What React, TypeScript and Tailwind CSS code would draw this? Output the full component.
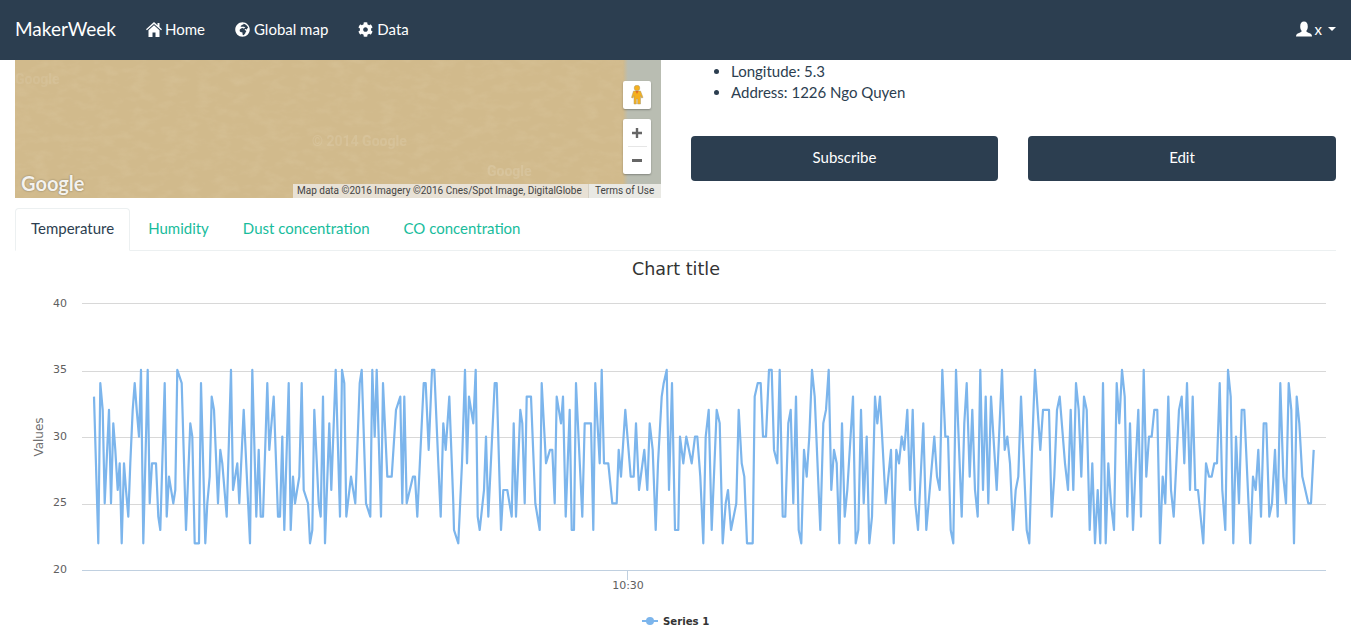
import { FaCog, FaGlobeAfrica } from "react-icons/fa";

// Traced vertices: [x, value] taken per chart band, x0 is the band's left edge
const bands: [number, number[]][] = [
  [20, [222,33,235,22,241,34,248,32,254,25,267,32,273,25,280,31,286,29,293,26,299,28,305,22,312,28,318,26,325,24,331,28,338,32,344,34,350,32,357,30,363,35,370,22,383,35,389,25,396,28,408,28,415,24,421,23,434,34,440,24,447,27,460,25,466,26,472,35,485,34,498,23,511,31,517,30,524,22,537,22,543,34,556,22,562,25,569,27,575,33,582,32,594,25,601,29,607,28,620,24,633,35,639,26,652,28,658,25,671,32,690,22,697,35,709,24,716,29,722,24,729,24,742,34,748,29,761,33,774,24,780,24,787,30,793,23,806,34,812,23,819,27,825,25,838,27,845,34,851,26,864,25,870,22,877,23,883,32,896,25,902,24,909,33,915,22,928,31,934,26,947,35,960,24,966,35,973,34,979,24]],
  [350, [3,27,16,25,29,34,35,35,48,25,61,24,67,35,74,30,80,35,93,24,99,34,112,27,125,27,138,32,151,33,157,25,163,33,170,25,189,27,195,27,202,24,221,34,227,34,236,29,246,35,253,35,265,28,272,24,280,31,287,29,298,33,310,25,312,23,325,22,336,28,345,35,351,28,357,33,370,31,377,35,383,24,389,23,402,26,408,30,415,24,434,34,440,34,453,23,460,26,472,26,485,24,491,31,498,24,511,32,517,31,524,25,530,33,543,33,556,25,569,23,575,34,588,28,600,29,607,29,614,25,620,33,633,31,639,33,647,24,659,32,665,23,672,23,678,34,697,24,704,31,723,31,730,23,736,34,749,28,755,35,762,28,775,28,787,25,800,25,806,29,813,27,826,32,842,27,851,27,858,31,867,26,883,29,892,26,899,31,908,29,917,23,924,28,935,33,941,34,950,35,957,26,966,34,975,23,985,23]],
  [680, [0,30,10,28,19,30,35,28,45,30,52,30,61,27,70,22,77,30,86,32,95,23,110,32,119,31,128,22,137,25,144,26,153,23,169,25,176,32,185,28,193,27,201,22,218,22,224,33,233,34,242,34,249,30,258,30,267,35,275,35,282,29,292,28,299,35,308,24,316,24,325,31,332,32,340,25,348,33,356,23,364,22,372,29,380,27,388,30,396,35,404,33,421,23,430,31,438,32,446,35,454,26,462,29,470,28,478,22,486,31,494,24,502,26,519,33,527,22,535,23,543,32,551,25,560,30,568,22,576,24,585,33,592,31,600,33,617,25,633,29,641,22,649,29,657,28,665,30,673,29,682,32,690,26,698,32,706,25,714,23,730,31,739,23,763,30,771,27,779,26,787,35,796,30,804,30,812,23,820,22,828,35,845,24,853,31,860,34,869,27,877,32,885,26,893,24,901,35,909,26,917,33,925,25,933,33,950,26,966,35,974,29,982,30]],
  [1010, [0,28,9,23,17,26,25,27,33,33,50,23,58,22,66,29,75,35,91,29,99,32,117,32,125,24,133,27,141,32,149,33,165,28,174,26,182,32,190,26,198,34,206,32,214,27,222,33,230,32,239,23,247,28,255,22,263,26,271,22,279,34,287,22,295,28,303,25,312,23,320,34,328,31,336,35,344,33,352,24,360,31,369,23,377,28,385,32,393,24,401,35,409,27,417,30,425,30,433,32,442,32,450,22,458,27,466,25,475,33,483,26,491,24,507,32,515,33,523,28,531,34,540,26,548,33,556,26,564,26,580,22,588,28,597,27,605,27,613,28,621,28,629,34,637,26,646,23,654,35,662,33,670,22,678,30,687,25,695,32,703,32,721,22,729,27,737,26,745,29,753,24,761,31,769,31,778,24,786,25,795,29,803,24,811,34,820,27,828,25,836,34,844,32,852,22,860,33,868,31,877,27,895,25,903,25,911,29]],
];

const valueY = (v: number) => 570 - (v - 20) * 13.34;

const linePoints = bands
  .flatMap(([x0, d]) => {
    const out: string[] = [];
    for (let i = 0; i < d.length; i += 2) {
      out.push(`${(x0 + d[i] / 3).toFixed(1)},${valueY(d[i + 1]).toFixed(1)}`);
    }
    return out;
  })
  .join(" ");

const yLabels = [
  { t: 40, y: 307 },
  { t: 35, y: 373 },
  { t: 30, y: 440 },
  { t: 25, y: 506 },
  { t: 20, y: 573 },
];

const UserIcon = () => (
  <svg width="16" height="16" viewBox="0 0 16 16" fill="currentColor">
    <path d="M0 15.5c0-2.2 1-3 3-3.6 1.6-.5 2.6-1 2.8-1.800-.9-1-1.600-2.500-1.600-4.600C4.200 2.300 5.600.500 8 .500s3.800 1.800 3.800 5c0 2.100-.7 3.600-1.600 4.600.2.800 1.200 1.300 2.800 1.800 2 .6 3 1.400 3 3.600z" />
  </svg>
);

const HomeIcon = () => (
  <svg width="16" height="15" viewBox="0 0 16 15" fill="currentColor">
    <path d="M8 0 0 7.200l.9 1L8 2l7.100 6.200.9-1L13.500 5V1h-2v2.200z" />
    <path d="M8 3.300 2.500 8.200V15h4v-4.500h3V15h4V8.200z" />
  </svg>
);

const NavLink = ({ icon, label }: { icon: React.ReactNode; label: string }) => (
  <a className="flex items-center text-white">
    <span className="flex w-[19px] shrink-0">{icon}</span>
    <span>{label}</span>
  </a>
);

const MapPanel = () => (
  <div className="relative h-[138px] w-[646px] shrink-0 overflow-hidden bg-[#d1ba8c] font-['Roboto',sans-serif]">
    {/* satellite texture + grey strip on the right */}
    <svg className="absolute inset-0 h-full w-full" viewBox="0 0 646 138">
      <defs>
        <filter id="sat">
          <feTurbulence type="fractalNoise" baseFrequency="0.06 0.12" numOctaves="3" seed="4" />
          <feColorMatrix values="0 0 0 0 0.95  0 0 0 0 0.88  0 0 0 0 0.72  0 0 0 0.9 -0.38" />
        </filter>
        <linearGradient id="edge" x1="0" x2="1">
          <stop offset="0" stopColor="#d1ba8c" />
          <stop offset="1" stopColor="#b9bdb2" />
        </linearGradient>
      </defs>
      <rect width="646" height="138" filter="url(#sat)" opacity="0.22" />
      <rect x="608" width="5" height="138" fill="url(#edge)" />
      <rect x="613" width="33" height="138" fill="#b9bdb2" />
      <text x="297" y="86" fontSize="14" fontWeight="700" fill="#fff" opacity="0.1">© 2014 Google</text>
      <text x="472" y="116" fontSize="14" fontWeight="700" fill="#fff" opacity="0.12">Google</text>
      <text x="0" y="24" fontSize="14" fontWeight="700" fill="#fff" opacity="0.08">Google</text>
    </svg>
    <span className="absolute bottom-[3px] left-[6px] font-['Lato',sans-serif] text-[20px] leading-[24px] font-bold text-[#f4f2ee] [text-shadow:0_0_2px_rgba(0,0,0,0.4)]">
      Google
    </span>
    <div className="absolute top-[21px] right-[10px] flex h-[28px] w-[28px] items-center justify-center rounded-[2px] bg-white shadow-[0_1px_2px_rgba(0,0,0,0.3)]">
      <svg width="14" height="20" viewBox="0 0 14 20">
        <circle cx="7" cy="3" r="2.800" fill="#f5b01e" stroke="#a89a70" strokeWidth="0.5" />
        <path d="M3.500 6h7l2.500 6.500-1.500.5-1-2.300V19H7.600V14H6.400v5H4V10.700L3 13l-1.500-.5z" fill="#f5b01e" stroke="#a89a70" strokeWidth="0.5" />
        <path d="M5.500 6 7 9l1.500-3z" fill="#e0682a" />
      </svg>
    </div>
    <div className="absolute top-[59px] right-[10px] flex h-[55px] w-[28px] flex-col items-center rounded-[2px] bg-white shadow-[0_1px_2px_rgba(0,0,0,0.3)]">
      <svg className="mt-[9px]" width="10" height="10" viewBox="0 0 10 10" fill="#666">
        <path d="M3.800 0h2.400v3.800H10v2.400H6.200V10H3.800V6.200H0V3.800h3.800z" />
      </svg>
      <div className="mt-[8px] h-px w-[19px] bg-[#e6e6e6]" />
      <svg className="mt-[12px]" width="10" height="3" viewBox="0 0 10 3" fill="#666">
        <rect width="10" height="3" />
      </svg>
    </div>
    <div className="absolute right-0 bottom-0 flex h-[14px] w-[368px] items-center bg-[#e8e1d5] text-[10px] leading-[14px] text-[#444]">
      <span className="w-[295px] pl-[4px] whitespace-nowrap">Map data ©2016 Imagery ©2016 Cnes/Spot Image, DigitalGlobe</span>
      <span className="h-full w-[73px] border-l border-[#d6d0c4] bg-[#e9e9e4] pl-[6px] whitespace-nowrap">Terms of Use</span>
    </div>
  </div>
);

const Chart = () => {
  const font = "'DejaVu Sans',sans-serif";
  return (
    <svg className="block h-[385px] w-[1321px]" viewBox="15 251 1321 385">
      <text x="676" y="275" textAnchor="middle" fontSize="17.500" fill="#333" fontFamily={font}>
        Chart title
      </text>
      {[303, 371, 437, 504].map((y) => (
        <line key={y} x1="82" x2="1326" y1={y + 0.5} y2={y + 0.5} stroke="#d8d8d8" />
      ))}
      <line x1="82" x2="1326" y1="570.5" y2="570.5" stroke="#c0d0e0" />
      <line x1="627.5" x2="627.5" y1="570" y2="580" stroke="#c0d0e0" />
      {yLabels.map((l) => (
        <text key={l.t} x="67" y={l.y} textAnchor="end" fontSize="11" fill="#606060" fontFamily={font}>
          {l.t}
        </text>
      ))}
      <text x="628" y="589" textAnchor="middle" fontSize="11" fill="#606060" fontFamily={font}>
        10:30
      </text>
      <text transform="translate(43 437) rotate(-90)" textAnchor="middle" fontSize="12" fill="#707070" fontFamily={font}>
        Values
      </text>
      <polyline points={linePoints} fill="none" stroke="#7cb5ec" strokeWidth="2.200" strokeLinejoin="round" />
      <line x1="642" x2="658" y1="621" y2="621" stroke="#7cb5ec" strokeWidth="2" />
      <circle cx="650" cy="621" r="4" fill="#7cb5ec" />
      <text x="663" y="625" fontSize="11.300" fontWeight="700" fill="#333" fontFamily="'DejaVu Sans Condensed','DejaVu Sans',sans-serif">
        Series 1
      </text>
    </svg>
  );
};

export default function App() {
  return (
    <div className="h-[636px] overflow-hidden bg-white font-['Lato',sans-serif] text-[15px] leading-[21px] text-[#2c3e50]">
      {/* navbar */}
      <nav className="flex h-[60px] items-center justify-between bg-[#2c3e50] px-[15px] pb-[2px] text-white">
        <div className="flex items-center">
          <span className="mb-[2px] text-[19px] leading-[21px]">MakerWeek</span>
          <div className="ml-[30px] flex items-center gap-[30px]">
            <NavLink icon={<HomeIcon />} label="Home" />
            <NavLink icon={<FaGlobeAfrica className="h-[15px] w-[15px]" />} label="Global map" />
            <NavLink icon={<FaCog className="h-[15px] w-[15px]" />} label="Data" />
          </div>
        </div>
        <div className="flex items-center gap-[3px]">
          <UserIcon />
          <span>x</span>
          <span className="ml-[3px] h-0 w-0 border-x-[4px] border-t-[4px] border-x-transparent border-t-white" />
        </div>
      </nav>

      <div className="px-[15px]">
        <div className="flex gap-[30px]">
          <MapPanel />
          <div className="flex flex-1 flex-col">
            <ul className="mt-px list-disc pl-[40px]">
              <li>Longitude: 5.3</li>
              <li>Address: 1226 Ngo Quyen</li>
            </ul>
            <div className="mt-[33px] flex gap-[30px]">
              <button className="h-[45px] w-[307px] rounded-[4px] bg-[#2c3e50] pb-[2px] text-white">Subscribe</button>
              <button className="h-[45px] w-[308px] rounded-[4px] bg-[#2c3e50] pb-[2px] text-white">Edit</button>
            </div>
          </div>
        </div>

        {/* tabs */}
        <div className="mt-[10px] flex h-[43px] border-b border-[#ecf0f1]">
          <a className="-mb-px h-[43px] rounded-t-[4px] border border-[#ecf0f1] border-b-white bg-white px-[15px] py-[9px]">Temperature</a>
          <a className="ml-[3px] px-[15px] py-[10px] text-[#18bc9c]">Humidity</a>
          <a className="ml-[4px] px-[15px] py-[10px] text-[#18bc9c]">Dust concentration</a>
          <a className="ml-[4px] px-[15px] py-[10px] text-[#18bc9c]">CO concentration</a>
        </div>

        <Chart />
      </div>
    </div>
  );
}
